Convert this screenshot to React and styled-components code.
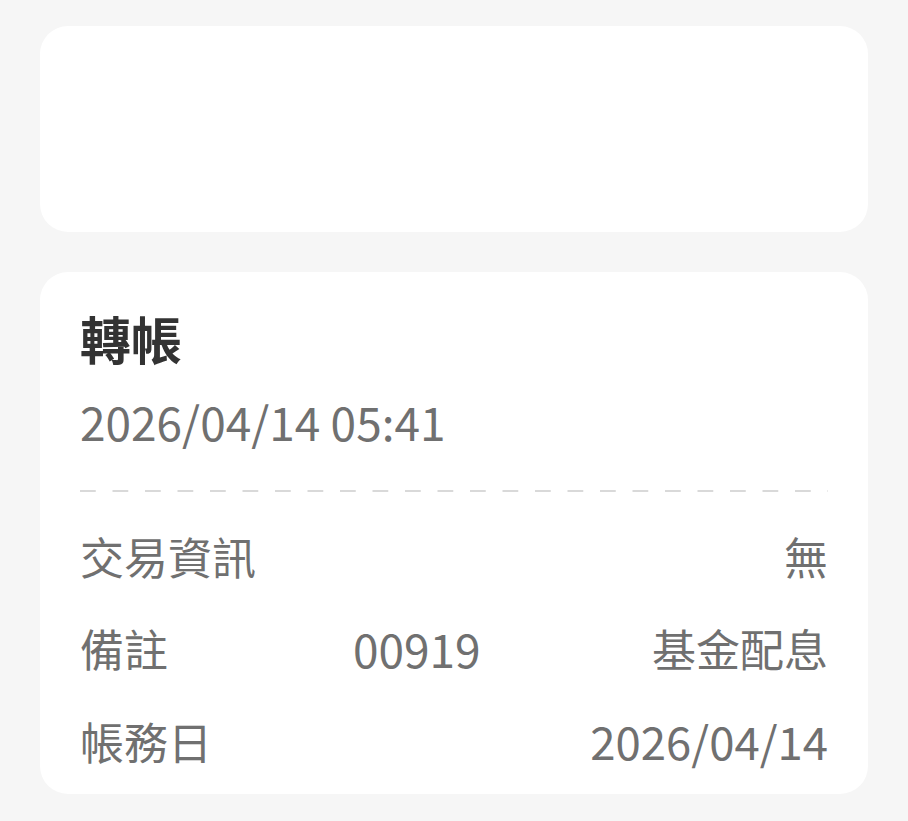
import React from "react";
import styled, { createGlobalStyle } from "styled-components";

const Global = createGlobalStyle`
  html, body { margin: 0; padding: 0; background: #f6f6f6; }
  body { font-family: "Noto Sans CJK TC", "Noto Sans", sans-serif; }
`;

const Page = styled.div`
  width: 908px;
  min-height: 821px;
  box-sizing: border-box;
  padding: 26px 40px 0;
  display: flex;
  flex-direction: column;
  gap: 40px;
`;

const Card = styled.div`
  background: #ffffff;
  border-radius: 28px;
  box-sizing: border-box;
  height: ${(p) => p.$h}px;
  padding: ${(p) => p.$pad || "0"};
  display: flex;
  flex-direction: column;
`;

const Title = styled.div`
  font-size: 51px;
  font-weight: 700;
  color: #333333;
  line-height: 1.2;
`;

const DateText = styled.div`
  margin-top: 25px;
  font-size: 46px;
  color: #707070;
  line-height: 1.2;
`;

const Dashed = styled.div`
  margin-top: 41px;
  height: 2px;
  background-image: linear-gradient(to right, #d9d9d9 0 16px, transparent 16px 32.5px);
  background-size: 32.5px 2px;
  background-repeat: repeat-x;
`;

const Rows = styled.div`
  margin-top: 37px;
  display: flex;
  flex-direction: column;
  gap: 37px;
`;

const Row = styled.div`
  display: grid;
  grid-template-columns: 273px 1fr auto;
  align-items: center;
  font-size: 44px;
  line-height: 55px;
  color: #707070;
`;

const Num = styled.span`
  font-size: ${(p) => p.$size || 46}px;
`;

const Right = styled.div`
  text-align: right;
`;

export default function App() {
  return (
    <>
      <Global />
      <Page>
        <Card $h={206} />
        <Card $h={522} $pad="36px 40px 0">
          <Title>轉帳</Title>
          <DateText>2026/04/14 05:41</DateText>
          <Dashed />
          <Rows>
            <Row>
              <span>交易資訊</span>
              <span />
              <Right>無</Right>
            </Row>
            <Row>
              <span>備註</span>
              <Num>00919</Num>
              <Right>基金配息</Right>
            </Row>
            <Row>
              <span>帳務日</span>
              <span />
              <Right>
                <Num $size={45.5}>2026/04/14</Num>
              </Right>
            </Row>
          </Rows>
        </Card>
      </Page>
    </>
  );
}
